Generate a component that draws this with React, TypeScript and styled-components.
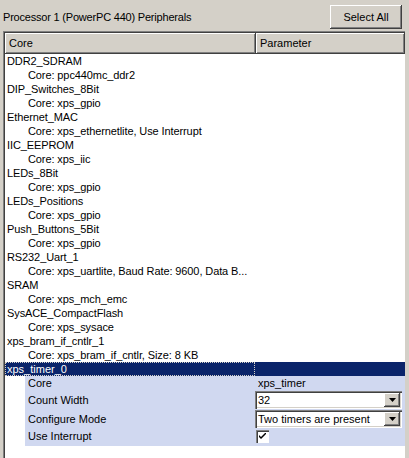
import styled, { createGlobalStyle } from 'styled-components';

const Global = createGlobalStyle`
  html, body {
    margin: 0;
    padding: 0;
    background: #d4d0c8;
    overflow: hidden;
  }
  body {
    font-family: Tahoma, "Liberation Sans", Arial, sans-serif;
    font-size: 11px;
    color: #000;
    -webkit-font-smoothing: none;
  }
`;

const Page = styled.div`
  width: 409px;
  height: 458px;
  display: flex;
  flex-direction: column;
`;

const TopBar = styled.div`
  display: flex;
  justify-content: space-between;
  align-items: center;
  height: 26px;
  padding: 4px 7px 0 3px;
`;

const Title = styled.span`
  letter-spacing: -0.2px;
`;

const Button = styled.button`
  width: 72px;
  height: 24px;
  font: inherit;
  background: #d4d0c8;
  border: none;
  box-shadow: inset -1px -1px #404040, inset 1px 1px #fff, inset -2px -2px #808080, inset 2px 2px #d4d0c8;
  padding: 0;
`;

const Frame = styled.div`
  flex: 1;
  margin: 1px 4px 0 3px;
  background: #fff;
  box-shadow: inset 1px 1px #808080, inset 2px 2px #404040;
  padding: 2px 0 0 2px;
  overflow: hidden;
`;

const Header = styled.div`
  display: grid;
  grid-template-columns: 251px 1fr;
  height: 21px;
`;

const HeadCell = styled.div`
  background: #d4d0c8;
  box-shadow: inset -1px -1px #404040, inset 1px 1px #fff, inset -2px -2px #808080;
  padding-left: 4px;
  line-height: 20px;
`;

const Row = styled.div<{ $indent?: boolean }>`
  height: 14px;
  line-height: 14px;
  padding-left: ${(p) => (p.$indent ? '23px' : '2px')};
  white-space: nowrap;
  letter-spacing: -0.1px;
`;

const Selected = styled.div`
  display: grid;
  grid-template-columns: 250px 1fr;
  height: 14px;
  line-height: 14px;
  background: #0a246a;
  color: #fff;
`;

const FocusCell = styled.div`
  outline: 1px dotted #d4d0c8;
  outline-offset: -1px;
  padding-left: 2px;
`;

const Props = styled.div`
  margin-left: 20px;
  background: #d0d8f0;
  padding-bottom: 3px;
`;

const PropRow = styled.div<{ $h: number }>`
  display: grid;
  grid-template-columns: 230px 1fr;
  height: ${(p) => p.$h}px;
  align-items: center;
`;

const PropLabel = styled.div`
  padding-left: 3px;
`;

const PropValue = styled.div`
  padding-left: 3px;
`;

const Combo = styled.div`
  display: flex;
  align-items: center;
  height: 18px;
  width: 147px;
  background: #fff;
  box-shadow: inset 1px 1px #808080, inset 2px 2px #404040, inset -1px -1px #fff, inset -2px -2px #d4d0c8;
  padding: 2px;
  box-sizing: border-box;
`;

const ComboText = styled.span`
  flex: 1;
  padding-left: 1px;
`;

const ComboButton = styled.div`
  width: 16px;
  height: 14px;
  background: #d4d0c8;
  box-shadow: inset -1px -1px #404040, inset 1px 1px #fff, inset -2px -2px #808080;
  display: flex;
  align-items: center;
  justify-content: center;
`;

const Check = styled.div`
  width: 13px;
  height: 13px;
  background: #fff;
  box-shadow: inset 1px 1px #808080, inset 2px 2px #404040, inset -1px -1px #fff;
  display: flex;
  align-items: center;
  justify-content: center;
  margin-left: 1px;
`;

const Arrow = () => (
  <svg width="7" height="4" viewBox="0 0 7 4">
    <path d="M0 0h7L3.5 4z" fill="#000" />
  </svg>
);

const items: [string, string][] = [
  ['DDR2_SDRAM', 'Core: ppc440mc_ddr2'],
  ['DIP_Switches_8Bit', 'Core: xps_gpio'],
  ['Ethernet_MAC', 'Core: xps_ethernetlite, Use Interrupt'],
  ['IIC_EEPROM', 'Core: xps_iic'],
  ['LEDs_8Bit', 'Core: xps_gpio'],
  ['LEDs_Positions', 'Core: xps_gpio'],
  ['Push_Buttons_5Bit', 'Core: xps_gpio'],
  ['RS232_Uart_1', 'Core: xps_uartlite, Baud Rate: 9600, Data B...'],
  ['SRAM', 'Core: xps_mch_emc'],
  ['SysACE_CompactFlash', 'Core: xps_sysace'],
  ['xps_bram_if_cntlr_1', 'Core: xps_bram_if_cntlr, Size: 8 KB'],
];

export default function App() {
  return (
    <Page>
      <Global />
      <TopBar>
        <Title>Processor 1 (PowerPC 440) Peripherals</Title>
        <Button>Select All</Button>
      </TopBar>
      <Frame>
        <Header>
          <HeadCell>Core</HeadCell>
          <HeadCell>Parameter</HeadCell>
        </Header>
        {items.map(([name, core]) => (
          <div key={name}>
            <Row>{name}</Row>
            <Row $indent>{core}</Row>
          </div>
        ))}
        <Selected>
          <FocusCell>xps_timer_0</FocusCell>
          <div />
        </Selected>
        <Props>
          <PropRow $h={14}>
            <PropLabel>Core</PropLabel>
            <PropValue>xps_timer</PropValue>
          </PropRow>
          <PropRow $h={19}>
            <PropLabel>Count Width</PropLabel>
            <Combo>
              <ComboText>32</ComboText>
              <ComboButton>
                <Arrow />
              </ComboButton>
            </Combo>
          </PropRow>
          <PropRow $h={20}>
            <PropLabel>Configure Mode</PropLabel>
            <Combo>
              <ComboText>Two timers are present</ComboText>
              <ComboButton>
                <Arrow />
              </ComboButton>
            </Combo>
          </PropRow>
          <PropRow $h={14}>
            <PropLabel>Use Interrupt</PropLabel>
            <Check>
              <svg width="7" height="7" viewBox="0 0 7 7">
                <path d="M0 2l2 2 5-5v2l-5 5-2-2z" fill="#000" />
              </svg>
            </Check>
          </PropRow>
        </Props>
      </Frame>
    </Page>
  );
}
